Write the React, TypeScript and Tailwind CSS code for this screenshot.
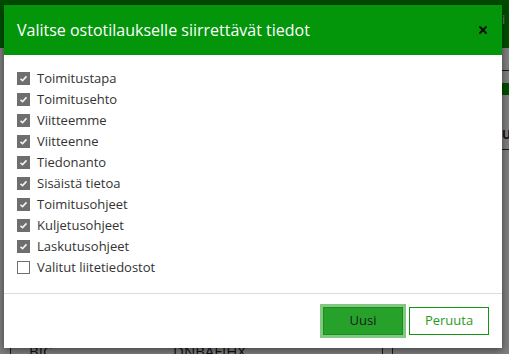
import { X } from "lucide-react";

const fields = [
	{ label: "Toimitustapa", checked: true },
	{ label: "Toimitusehto", checked: true },
	{ label: "Viitteemme", checked: true },
	{ label: "Viitteenne", checked: true },
	{ label: "Tiedonanto", checked: true },
	{ label: "Sisäistä tietoa", checked: true },
	{ label: "Toimitusohjeet", checked: true },
	{ label: "Kuljetusohjeet", checked: true },
	{ label: "Laskutusohjeet", checked: true },
	{ label: "Valitut liitetiedostot", checked: false },
];

function Checkbox({ checked }: { checked: boolean }) {
	if (!checked) {
		return <span className="w-[13px] h-[13px] border border-[#6f6f6f] bg-white shrink-0" />;
	}
	return (
		<span className="w-[13px] h-[13px] bg-[#6e6e6e] flex items-center justify-center shrink-0">
			<svg width="9" height="9" viewBox="0 0 9 9">
				<path d="M1.5 4.8 L3.6 6.6 L7.5 2.4" fill="none" stroke="#f2f2f2" strokeWidth="1.6" />
			</svg>
		</span>
	);
}

export default function App() {
	return (
		<div
			className="relative w-[509px] h-[354px] overflow-hidden bg-white"
			style={{ fontFamily: '"Open Sans", "Liberation Sans", sans-serif' }}
		>
			{/* page behind the dialog */}
			<div className="h-[48px] bg-[#009a00] flex items-start justify-end px-1 pt-[12px] text-white text-xs">
				<span>Li</span>
			</div>
			<div className="flex h-[306px]">
				<div className="w-[11px] border-r border-[#333]" />
				<div className="flex-1 flex flex-col justify-end text-[15px] text-[#222]">
					<div className="flex translate-y-[8px]">
						<span className="w-[162px] pl-[18px]">BIC</span>
						<span>DNBAFIHX</span>
					</div>
				</div>
				<div className="w-[11px] border-x border-[#333]" />
				<div className="w-[116px] flex flex-col items-end">
					<div className="mt-[22px] w-[10px] h-[1px] bg-[#333]" />
					<div className="mt-[12px] w-[8px] h-[12px] bg-[#009a00]" />
					<div className="mt-[32px] text-xs font-bold text-[#223] -mr-[2px]">SU</div>
					<div className="mt-[6px] w-[10px] h-[1px] bg-[#333]" />
				</div>
			</div>
			<div className="absolute inset-0 bg-black/50" />

			{/* dialog */}
			<div className="absolute left-[4px] top-[5px] w-[498px] h-[343px] bg-white flex flex-col shadow-[0_2px_8px_rgba(0,0,0,0.5)]">
				<div className="h-[50px] bg-[#03960b] flex items-center justify-between pl-[13px] pr-[13px]">
					<h2 className="text-[16px] text-white">Valitse ostotilaukselle siirrettävät tiedot</h2>
					<X size={12} strokeWidth={4} className="text-[#111]" />
				</div>

				<div className="flex-1 pt-[13px] pl-[13px]">
					{fields.map((f) => (
						<div key={f.label} className="h-[21px] flex items-center gap-[7px] text-[13px] text-[#333]">
							<Checkbox checked={f.checked} />
							<span>{f.label}</span>
						</div>
					))}
				</div>

				<div className="h-[55px] border-t border-[#dcdcdc] flex items-start justify-end gap-[6px] pt-[13px] pr-[13px]">
					<button className="w-[80px] h-[28px] bg-[#26a22b] border border-[#1d8c22] text-[13px] text-[#1a1a1a] shadow-[0_0_0_3px_#82c882]">
						Uusi
					</button>
					<button className="w-[80px] h-[28px] bg-white border border-[#129512] text-[13px] text-[#2a9a1e]">
						Peruuta
					</button>
				</div>
			</div>
		</div>
	);
}
